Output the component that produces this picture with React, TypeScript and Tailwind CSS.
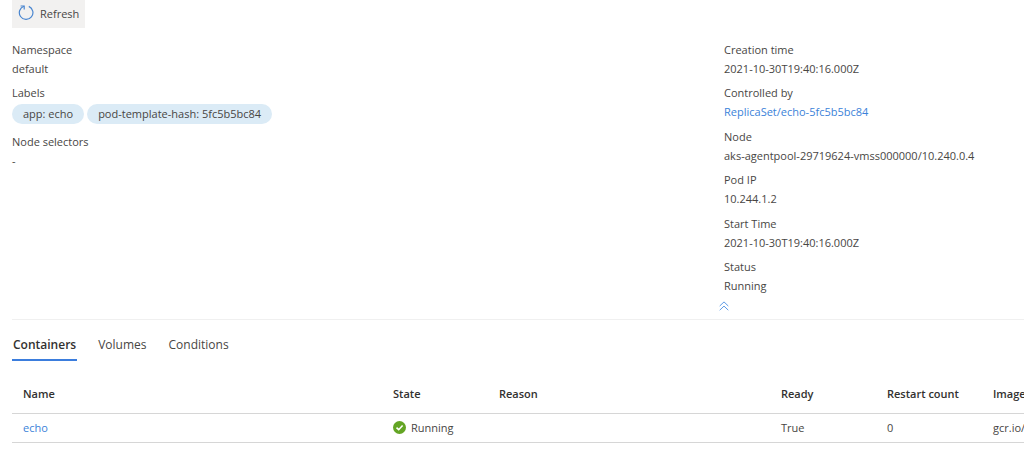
import type { ReactNode } from "react";

const tabs = ["Containers", "Volumes", "Conditions"];

const columns = [
  { title: "Name", width: "w-[370px]" },
  { title: "State", width: "w-[106px]" },
  { title: "Reason", width: "w-[282px]" },
  { title: "Ready", width: "w-[106px]" },
  { title: "Restart count", width: "w-[106px]" },
  { title: "Image", width: "w-auto" },
];

const containers = [
  { name: "echo", state: "Running", reason: "", ready: "True", restarts: 0, image: "gcr.io/" },
];

function RefreshIcon() {
  return (
    <svg className="w-4 h-4 shrink-0" viewBox="0 0 16 16" fill="none" stroke="#4a86d0" strokeWidth="1.2">
      <path d="M10.8 1.4A6.8 6.8 0 1 1 6 1.2" />
      <path d="M2.6 1H6.2V4.6" />
    </svg>
  );
}

function CheckIcon() {
  return (
    <svg className="w-[13px] h-[13px] shrink-0" viewBox="0 0 13 13" fill="none">
      <circle cx="6.5" cy="6.5" r="6.5" fill="#64a524" />
      <path d="M3.5 6.6L5.7 8.7L9.6 4.5" stroke="#fff" strokeWidth="1.6" />
    </svg>
  );
}

function CollapseIcon() {
  return (
    <svg className="w-[10px] h-[10px]" viewBox="0 0 10 10" fill="none" stroke="#5c9ae6" strokeWidth="1">
      <path d="M0.7 5L5 0.9L9.3 5" />
      <path d="M0.7 9.2L5 5.1L9.3 9.2" />
    </svg>
  );
}

function Field({ label, children }: { label: string; children: ReactNode }) {
  return (
    <div>
      <dt>{label}</dt>
      <dd>{children}</dd>
    </div>
  );
}

function Pill({ children }: { children: ReactNode }) {
  return <span className="h-5 rounded-full bg-[#dbebf6] px-[11px] leading-5">{children}</span>;
}

export default function App() {
  return (
    <main className="overflow-hidden bg-white pl-3 pb-6 font-['Open_Sans','Noto_Sans',sans-serif] text-[11px] leading-[19px] text-[#484644]">
      {/* Toolbar */}
      <div className="flex">
        <button type="button" className="flex h-7 items-center gap-[6px] bg-[#f2f1f0] px-[6px] pb-[2px]">
          <RefreshIcon />
          Refresh
        </button>
      </div>

      {/* Properties */}
      <section className="grid min-h-[292px] grid-cols-[712fr_300fr] border-b border-[#f0f0f0] pt-3 pb-2">
        <dl className="flex flex-col gap-[5px]">
          <Field label="Namespace">default</Field>
          <Field label="Labels">
            <span className="flex gap-[3px] pt-[2px] pb-[3px]">
              <Pill>app: echo</Pill>
              <Pill>pod-template-hash: 5fc5b5bc84</Pill>
            </span>
          </Field>
          <Field label="Node selectors">-</Field>
        </dl>
        <div className="flex flex-col items-start">
          <dl className="flex flex-1 flex-col justify-between">
            <Field label="Creation time">2021-10-30T19:40:16.000Z</Field>
            <Field label="Controlled by">
              <a href="#replicaset" className="text-[#3b82d9]">ReplicaSet/echo-5fc5b5bc84</a>
            </Field>
            <Field label="Node">aks-agentpool-29719624-vmss000000/10.240.0.4</Field>
            <Field label="Pod IP">10.244.1.2</Field>
            <Field label="Start Time">2021-10-30T19:40:16.000Z</Field>
            <Field label="Status">Running</Field>
          </dl>
          <button type="button" aria-label="Collapse" className="-ml-[5px] mt-[6px] block">
            <CollapseIcon />
          </button>
        </div>
      </section>

      {/* Tabs */}
      <div role="tablist" className="flex gap-5 pt-3 text-xs">
        {tabs.map((tab, i) => (
          <button
            key={tab}
            type="button"
            role="tab"
            aria-selected={i === 0}
            className={
              i === 0
                ? "h-[29px] border-b-2 border-[#3b7ddd] px-px pb-[2px] font-semibold text-[#323130]"
                : "h-[29px] border-b-2 border-transparent px-px pb-[2px]"
            }
          >
            {tab}
          </button>
        ))}
      </div>

      {/* Containers */}
      <table className="mt-[14px] w-full table-fixed border-collapse text-left">
        <thead>
          <tr className="h-[38px] border-b border-[#d6d6d6]">
            {columns.map((col) => (
              <th key={col.title} scope="col" className={`${col.width} whitespace-nowrap p-0 pl-[11px] font-semibold text-[#323130]`}>
                {col.title}
              </th>
            ))}
          </tr>
        </thead>
        <tbody>
          {containers.map((c) => (
            <tr key={c.name} className="h-[29px] border-b border-[#d6d6d6]">
              <td className="p-0 pl-[11px]">
                <a href="#echo" className="text-[#3b82d9]">{c.name}</a>
              </td>
              <td className="p-0 pl-[11px]">
                <span className="flex items-center gap-[5px]">
                  <CheckIcon />
                  {c.state}
                </span>
              </td>
              <td className="p-0 pl-[11px]">{c.reason}</td>
              <td className="p-0 pl-[11px]">{c.ready}</td>
              <td className="p-0 pl-[11px]">{c.restarts}</td>
              <td className="whitespace-nowrap p-0 pl-[11px]">{c.image}</td>
            </tr>
          ))}
        </tbody>
      </table>
    </main>
  );
}
